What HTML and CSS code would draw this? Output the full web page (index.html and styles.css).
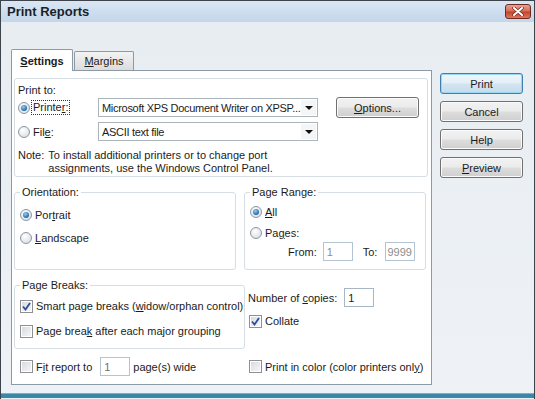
FILE: index.html
```html
<!DOCTYPE html>
<html lang="en">
<head>
    <meta charset="UTF-8">
    <title>Print Reports</title>
    <link rel="stylesheet" href="styles.css">
</head>
<body>
    <div class="window">
        <div class="titlebar">
            <span class="title">Print Reports</span>
            <span class="close">
                <svg width="12" height="9" viewBox="0 0 12 9"><path d="M2 1 L10 8 M10 1 L2 8" stroke="#7a2418" stroke-width="3.4" stroke-linecap="round"/><path d="M2 1 L10 8 M10 1 L2 8" stroke="#fff" stroke-width="2" stroke-linecap="round"/></svg>
            </span>
        </div>

        <div class="client">
            <div class="sheet">
                <div class="tabs">
                    <div class="tab active"><span><u>S</u>ettings</span></div>
                    <div class="tab"><span><u>M</u>argins</span></div>
                </div>

                <div class="panel">
                    <div class="print-to">
                        <div class="caption">Print to:</div>
                        <div class="target first">
                            <div class="opt pick"><span class="radio on"></span><span class="focus">Printe<u>r</u>:</span></div>
                            <div class="combo"><span class="value">Microsoft XPS Document Writer on XPSP...</span><i class="arrow"></i></div>
                            <button class="btn options"><u>O</u>ptions...</button>
                        </div>
                        <div class="target">
                            <div class="opt pick"><span class="radio"></span><span>Fil<u>e</u>:</span></div>
                            <div class="combo"><span class="value">ASCII text file</span><i class="arrow"></i></div>
                        </div>
                        <div class="note">
                            <span>Note:</span>
                            <span>To install additional printers or to change port<br>assignments, use the Windows Control Panel.</span>
                        </div>
                    </div>

                    <div class="line groups">
                        <fieldset class="group orient">
                            <legend>Orientation:</legend>
                            <div class="opt"><span class="radio on"></span><span>Por<u>t</u>rait</span></div>
                            <div class="opt next"><span class="radio"></span><span><u>L</u>andscape</span></div>
                        </fieldset>
                        <fieldset class="group range">
                            <legend>Page Range:</legend>
                            <div class="opt"><span class="radio on"></span><span><u>A</u>ll</span></div>
                            <div class="opt pages"><span class="radio"></span><span>Pa<u>g</u>es:</span></div>
                            <div class="from-to">
                                <span>From:</span>
                                <span class="field off from">1</span>
                                <span class="to-label">To:</span>
                                <span class="field off to">9999</span>
                            </div>
                        </fieldset>
                    </div>

                    <div class="line breaks-row">
                        <fieldset class="group breaks">
                            <legend>Page Breaks:</legend>
                            <div class="opt"><span class="check on"><svg width="11" height="11" viewBox="0 0 11 11"><path d="M2 5.5 L4.5 8.5 L9 2" fill="none" stroke="#2b4c9b" stroke-width="1.8"/></svg></span><span>Smart page breaks (<u>w</u>idow/orphan control)</span></div>
                            <div class="opt next-break"><span class="check"></span><span>Page brea<u>k</u> after each major grouping</span></div>
                        </fieldset>
                        <div class="copies">
                            <div class="copies-line">
                                <span>Number of <u>c</u>opies:</span>
                                <span class="field count">1</span>
                            </div>
                            <div class="opt collate"><span class="check on"><svg width="11" height="11" viewBox="0 0 11 11"><path d="M2 5.5 L4.5 8.5 L9 2" fill="none" stroke="#2b4c9b" stroke-width="1.8"/></svg></span><span>Collate</span></div>
                        </div>
                    </div>

                    <div class="line bottom-row">
                        <div class="opt fit"><span class="check"></span><span>F<u>i</u>t report to</span><span class="field off wide-count">1</span><span>page(s) wide</span></div>
                        <div class="opt"><span class="check"></span><span>Print in color (color printers onl<u>y</u>)</span></div>
                    </div>
                </div>
            </div>

            <div class="actions">
                <button class="btn default">Print</button>
                <button class="btn">Cancel</button>
                <button class="btn">Help</button>
                <button class="btn"><u>P</u>review</button>
            </div>
        </div>
    </div>
</body>
</html>
```

FILE: styles.css
```css
* {
    margin: 0;
    padding: 0;
    box-sizing: border-box;
}

body {
    font-family: "Liberation Sans", Arial, sans-serif;
    font-size: 11px;
    color: #1b1b1b;
    background: #eef2f6;
}

u {
    text-decoration-thickness: 1px;
    text-underline-offset: 1px;
}

.window {
    width: 535px;
    height: 399px;
    border: 1px solid #3c434b;
    border-bottom: none;
    background: #edf1f5;
    display: flex;
    flex-direction: column;
    overflow: hidden;
}

.titlebar {
    height: 21px;
    flex: none;
    display: flex;
    align-items: center;
    justify-content: space-between;
    padding: 0 3px 0 6px;
    background: linear-gradient(#dae6f3, #c3d6eb);
}

.title {
    font-size: 13px;
    font-weight: bold;
    color: #1a1f26;
}

.close {
    width: 26px;
    height: 15px;
    border: 1px solid #6e2b22;
    border-radius: 3px;
    display: flex;
    align-items: center;
    justify-content: center;
    background: linear-gradient(#e6a294, #d66b55 48%, #c4412a 52%, #d9785e);
}

.client {
    flex: 1;
    display: flex;
    padding: 27px 0 0 10px;
    background: linear-gradient(#e8edf2, #eef2f6);
    border-bottom: 1px solid #98a6b2;
    box-shadow: 0 4px 0 #3a87a7;
    margin-bottom: 5px;
}

.sheet {
    width: 421px;
}

.tabs {
    display: flex;
    align-items: flex-end;
    height: 21px;
}

.tab {
    width: 60px;
    height: 19px;
    margin-left: 1px;
    display: flex;
    align-items: center;
    justify-content: center;
    border: 1px solid #8c9aa6;
    border-bottom: none;
    border-radius: 2px 2px 0 0;
    background: linear-gradient(#f3f3f3, #dcdcdc);
}

.tab.active {
    width: 62px;
    height: 22px;
    margin: 0 0 -1px 0;
    font-weight: bold;
    background: #fff;
    position: relative;
    z-index: 1;
}

.panel {
    height: 315px;
    border: 1px solid #8c9aa6;
    background: #fff;
    padding: 7px 3px 0 2px;
}

.print-to {
    height: 99px;
    border: 1px solid #d6dee4;
    border-radius: 3px;
    padding: 5px 0 0 3px;
}

.caption {
    line-height: 13px;
}

.target {
    display: flex;
    align-items: center;
    height: 19px;
    margin-top: 4px;
}

.target.first {
    height: 21px;
    margin-top: 0;
}

.opt {
    display: flex;
    align-items: center;
    height: 16px;
    white-space: nowrap;
}

.opt.pick {
    width: 80px;
}

.focus {
    outline: 1px dotted #333;
    padding: 0 1px;
    margin-left: -1px;
    line-height: 13px;
}

.radio {
    width: 12px;
    height: 12px;
    margin-right: 3px;
    flex: none;
    border: 1px solid #8b98a4;
    border-radius: 50%;
    background: radial-gradient(circle at 40% 35%, #ffffff, #d3d8de);
    display: flex;
    align-items: center;
    justify-content: center;
}

.radio.on::after {
    content: "";
    width: 6px;
    height: 6px;
    border-radius: 50%;
    background: radial-gradient(circle at 40% 35%, #8fd0f5, #1d5f9f 75%);
}

.check {
    width: 13px;
    height: 13px;
    margin-right: 3px;
    flex: none;
    border: 1px solid #8e9093;
    background: linear-gradient(135deg, #d5d9de, #f8f8f8);
    box-shadow: inset 0 0 0 1px #fff;
    display: flex;
    align-items: center;
    justify-content: center;
}

.combo {
    width: 220px;
    height: 19px;
    border: 1px solid #abb3bb;
    background: #fff;
    display: flex;
    align-items: center;
    justify-content: space-between;
    padding-left: 3px;
}

.combo .value {
    white-space: nowrap;
    letter-spacing: -0.3px;
}

.arrow {
    width: 15px;
    height: 15px;
    margin-right: 1px;
    flex: none;
    display: flex;
    align-items: center;
    justify-content: center;
    background: #f4f5f6;
}

.arrow::after {
    content: "";
    border-left: 4px solid transparent;
    border-right: 4px solid transparent;
    border-top: 4px solid #111;
}

.btn {
    width: 83px;
    height: 21px;
    font-family: inherit;
    font-size: 11px;
    color: #1b1b1b;
    border: 1px solid #707070;
    border-radius: 3px;
    background: linear-gradient(#f2f2f2, #ebebeb 48%, #dddddd 52%, #cfcfcf);
    box-shadow: inset 0 0 0 1px #fbfbfb;
}

.btn.options {
    margin-left: 18px;
}

.btn.default {
    border-color: #3c7fb1;
    box-shadow: inset 0 0 0 1px #9ad7f5;
    background: linear-gradient(#eef6fb, #e3eff7 48%, #d3e4f0 52%, #c6dcea);
}

.actions {
    display: flex;
    flex-direction: column;
    gap: 7px;
    margin-left: 8px;
    padding-top: 24px;
}

.note {
    display: flex;
    gap: 4px;
    margin-top: 8px;
    line-height: 13px;
}

.line {
    display: flex;
}

.groups {
    margin-top: 9px;
    gap: 8px;
}

.group {
    border: 1px solid #d6dee4;
    border-radius: 3px;
    padding: 0 5px;
    min-width: 0;
}

.group legend {
    padding: 0 2px;
    line-height: 13px;
}

.orient {
    width: 222px;
    height: 84px;
    padding-top: 8px;
}

.opt.next {
    margin-top: 7px;
}

.range {
    width: 182px;
    height: 84px;
    padding-top: 5px;
}

.opt.pages {
    margin-top: 5px;
}

.from-to {
    display: flex;
    align-items: center;
    margin-top: 1px;
    padding-left: 38px;
}

.field {
    height: 19px;
    width: 30px;
    border: 1px solid #a9b6c3;
    background: #fff;
    padding-left: 3px;
    display: flex;
    align-items: center;
}

.field.off {
    color: #8d8d8d;
    border-color: #b5c4d3;
}

.field.from {
    margin-left: 6px;
}

.to-label {
    margin-left: 10px;
}

.field.to {
    margin-left: 8px;
    padding-left: 1px;
}

.breaks-row {
    margin-top: 9px;
}

.breaks {
    width: 231px;
    height: 70px;
    padding-top: 6px;
}

.opt.next-break {
    margin-top: 9px;
}

.copies {
    margin: 9px 0 0 3px;
}

.copies-line {
    display: flex;
    align-items: center;
    gap: 7px;
}

.field.count {
    width: 30px;
}

.opt.collate {
    margin: 6px 0 0 1px;
}

.bottom-row {
    margin-top: 8px;
    padding-left: 6px;
    height: 19px;
    align-items: center;
}

.opt.fit {
    width: 229px;
}

.field.wide-count {
    margin: 0 3px 0 8px;
    color: #6f6f6f;
}
```
